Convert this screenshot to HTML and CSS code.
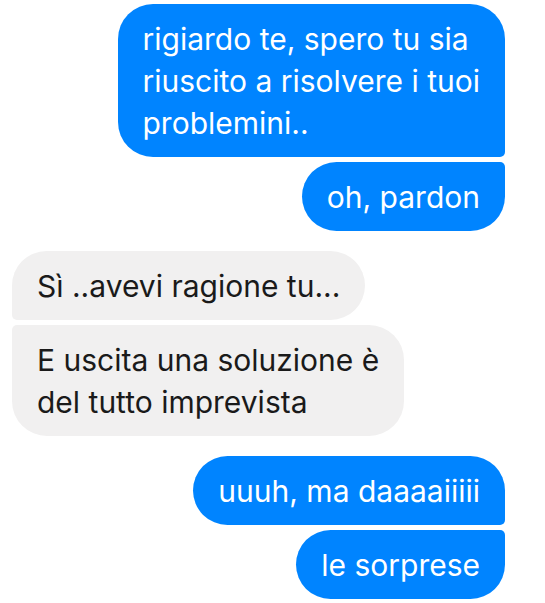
FILE: index.html
```html
<!DOCTYPE html>
<html lang="it">
<head>
<meta charset="UTF-8">
<meta name="viewport" content="width=device-width, initial-scale=1.0">
<title>Chat</title>
<link rel="stylesheet" href="styles.css">
</head>
<body>

<div class="thread">
  <!-- my messages -->
  <div class="group group-out">
    <div class="bubble bubble-out first">rigiardo te, spero tu sia<br>riuscito a risolvere i tuoi<br>problemini..</div>
    <div class="bubble bubble-out last">oh, pardon</div>
  </div>

  <!-- their messages -->
  <div class="group group-in">
    <div class="bubble bubble-in first">Sì ..avevi ragione tu...</div>
    <div class="bubble bubble-in last">E uscita una soluzione è<br>del tutto imprevista</div>
  </div>

  <div class="group group-out">
    <div class="bubble bubble-out first">uuuh, ma daaaaiiiii</div>
    <div class="bubble bubble-out last">le sorprese</div>
  </div>
</div>

</body>
</html>
```

FILE: styles.css
```css
/* Page */
body {
  margin: 0;
  background-color: #ffffff;
  font-family: Inter, "Liberation Sans", sans-serif;
}

/* Message list */
.thread {
  display: flex;
  flex-direction: column;
  gap: 20px;
  padding: 4px 40px 0 12px;
}

/* A run of messages from the same person */
.group {
  display: flex;
  flex-direction: column;
  gap: 5px;
}

.group-out {
  align-items: flex-end;
}

.group-in {
  align-items: flex-start;
}

/* Bubbles */
.bubble {
  padding: 14px 25px 13px;
  font-size: 30px;
  line-height: 42px;
  white-space: nowrap;
  border-radius: 35px;
}

.bubble-out {
  background-color: #0084ff;
  color: #ffffff;
}

.bubble-in {
  background-color: #f1f0f0;
  color: #1a1a1a;
}

/* Corners on the side the bubbles join */
.bubble-out.first {
  border-bottom-right-radius: 5px;
}

.bubble-out.last {
  border-top-right-radius: 5px;
}

.bubble-in.first {
  border-bottom-left-radius: 5px;
}

.bubble-in.last {
  border-top-left-radius: 5px;
}
```
